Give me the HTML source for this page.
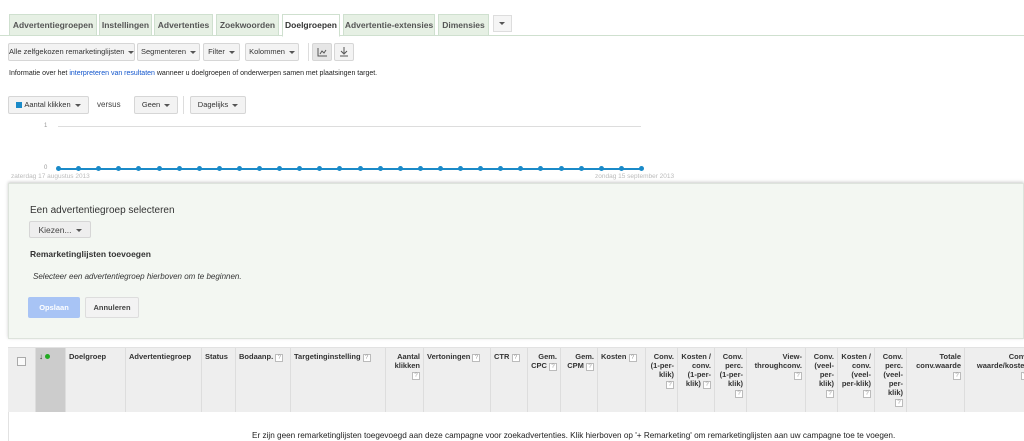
<!DOCTYPE html>
<html><head><meta charset="utf-8"><style>
*{box-sizing:border-box;margin:0;padding:0}
body{width:1024px;height:441px;overflow:hidden;background:#fff;font-family:"Liberation Sans",Arial,sans-serif;color:#222;position:relative}
.a{position:absolute}
.tab{position:absolute;top:14px;height:22px;border:1px solid #cfe0cf;background:#e6f0e4;font-size:8.5px;font-weight:bold;color:#555;text-align:center;line-height:21px}
.btn{position:absolute;height:18px;border:1px solid #d6d6d6;background:#f3f3f3;border-radius:2px;font-size:7.5px;color:#333;line-height:16px;padding:0;text-align:center;white-space:nowrap;overflow:hidden}
.car{display:inline-block;width:0;height:0;border-left:3px solid transparent;border-right:3px solid transparent;border-top:3px solid #555;vertical-align:middle;margin-left:4px}
.th{position:absolute;top:348px;height:64px;border-left:1px solid #ddd;background:#eee;font-size:7.5px;font-weight:bold;color:#333;padding:4px 3px;line-height:9px}
.q{display:inline-block;width:8px;height:8px;border:1px solid #bbb;background:#fff;font-size:6px;color:#999;line-height:6px;text-align:center;font-weight:normal}
.r{text-align:right}
.dot{position:absolute;top:166px;width:5px;height:5px;border-radius:50%;background:#1a8ac8}
</style></head><body>
<div class="a" style="left:0;top:35px;width:1024px;height:1px;background:#cfe0cf"></div>
<div class="tab" style="left:9px;width:88px">Advertentiegroepen</div>
<div class="tab" style="left:99px;width:53px">Instellingen</div>
<div class="tab" style="left:154px;width:59px">Advertenties</div>
<div class="tab" style="left:216px;width:63px">Zoekwoorden</div>
<div class="tab" style="left:282px;width:58px;background:#fff;border-bottom-color:#fff;color:#333;height:23px">Doelgroepen</div>
<div class="tab" style="left:343px;width:92px">Advertentie-extensies</div>
<div class="tab" style="left:438px;width:51px">Dimensies</div>
<div class="a" style="left:493px;top:15px;width:19px;height:17px;border:1px solid #ddd;background:#f5f5f5"><span class="car" style="margin:6px 0 0 5px;display:block"></span></div>

<div class="btn" style="left:8px;top:43px;width:127px">Alle zelfgekozen remarketinglijsten<span class="car"></span></div>
<div class="btn" style="left:137px;top:43px;width:63px">Segmenteren<span class="car"></span></div>
<div class="btn" style="left:203px;top:43px;width:37px">Filter<span class="car"></span></div>
<div class="btn" style="left:245px;top:43px;width:54px">Kolommen<span class="car"></span></div>
<div class="a" style="left:308px;top:43px;width:1px;height:18px;background:#ddd"></div>
<div class="btn" style="left:312px;top:43px;width:20px;background:#e6e6e6"><svg width="10" height="9" style="margin-top:4px"><path d="M1 0V8H10M3 6L5 3L7 5L9 2" stroke="#555" fill="none"/></svg></div>
<div class="btn" style="left:334px;top:43px;width:20px"><svg width="10" height="10" style="margin-top:3px"><path d="M5 0V6M2 4L5 7L8 4M1 9H9" stroke="#555" fill="none"/></svg></div>

<div class="a" style="left:9px;top:70px;font-size:7px;color:#222">Informatie over het <span style="color:#1155cc">interpreteren van resultaten</span> wanneer u doelgroepen of onderwerpen samen met plaatsingen target.</div>

<div class="btn" style="left:8px;top:96px;width:81px"><span style="display:inline-block;width:6px;height:6px;background:#1a8ac8;vertical-align:middle;margin-right:2px"></span>Aantal klikken<span class="car"></span></div>
<div class="a" style="left:97px;top:100px;font-size:8px;color:#444">versus</div>
<div class="btn" style="left:134px;top:96px;width:44px">Geen<span class="car"></span></div>
<div class="a" style="left:183px;top:96px;width:1px;height:18px;background:#ddd"></div>
<div class="btn" style="left:190px;top:96px;width:56px">Dagelijks<span class="car"></span></div>

<div class="a" style="left:44px;top:123px;font-size:6px;color:#999">1</div>
<div class="a" style="left:58px;top:126px;width:583px;height:1px;background:#ddd"></div>
<div class="a" style="left:44px;top:165px;font-size:6px;color:#999">0</div>
<div class="a" style="left:58px;top:168px;width:583px;height:1.5px;background:#1a8ac8"></div>
<div id="dots"></div>
<script>
var h='';for(var i=0;i<30;i++){var x=56+i*20.1;h+='<div class="dot" style="left:'+x+'px"></div>';}document.getElementById('dots').innerHTML=h;
</script>
<div class="a" style="left:11px;top:173px;font-size:6.5px;color:#bbb">zaterdag 17 augustus 2013</div>
<div class="a" style="left:595px;top:173px;font-size:6.5px;color:#bbb">zondag 15 september 2013</div>

<div class="a" style="left:8px;top:183px;width:1016px;height:156px;background:#f3f7f2;border:1px solid #dde3dc;box-shadow:0 -1px 3px #ccc"></div>
<div class="a" style="left:30px;top:205px;font-size:10px;color:#333">Een advertentiegroep selecteren</div>
<div class="btn" style="left:29px;top:221px;width:62px;height:17px;font-size:8.5px;color:#444;background:#eee">Kiezen...<span class="car"></span></div>
<div class="a" style="left:30px;top:249px;font-size:8.5px;font-weight:bold;color:#333">Remarketinglijsten toevoegen</div>
<div class="a" style="left:33px;top:272px;font-size:8px;font-style:italic;color:#333">Selecteer een advertentiegroep hierboven om te beginnen.</div>
<div class="a" style="left:28px;top:297px;width:52px;height:21px;background:#a8c4f5;border-radius:2px;color:#fff;font-size:7.5px;font-weight:bold;text-align:center;line-height:21px">Opslaan</div>
<div class="a" style="left:85px;top:297px;width:54px;height:21px;background:#f3f3f3;border:1px solid #ddd;border-radius:2px;color:#444;font-size:7.5px;font-weight:bold;text-align:center;line-height:19px">Annuleren</div>

<div class="a" style="left:8px;top:347px;width:1016px;height:94px;border:1px solid #e2e2e2;border-right:none;border-bottom:none"></div>
<div class="th" style="left:8px;width:27px;border-left:none"><span style="display:block;width:9px;height:9px;border:1px solid #aaa;background:#fafafa;margin:5px 0 0 6px"></span></div>
<div class="th" style="left:35px;width:30px;background:#ccc;font-size:8px">↓ <span style="display:inline-block;width:5px;height:5px;border-radius:50%;background:#2a2;vertical-align:middle"></span></div>
<div class="th" style="left:65px;width:60px">Doelgroep</div>
<div class="th" style="left:125px;width:76px">Advertentiegroep</div>
<div class="th" style="left:201px;width:34px">Status</div>
<div class="th" style="left:235px;width:55px">Bodaanp. <span class="q">?</span></div>
<div class="th" style="left:290px;width:95px">Targetinginstelling <span class="q">?</span></div>
<div class="th r" style="left:385px;width:38px">Aantal klikken <span class="q">?</span></div>
<div class="th" style="left:423px;width:67px">Vertoningen <span class="q">?</span></div>
<div class="th" style="left:490px;width:37px">CTR <span class="q">?</span></div>
<div class="th r" style="left:527px;width:33px">Gem. CPC <span class="q">?</span></div>
<div class="th r" style="left:560px;width:37px">Gem. CPM <span class="q">?</span></div>
<div class="th" style="left:597px;width:48px">Kosten <span class="q">?</span></div>
<div class="th r" style="left:645px;width:32px">Conv. (1-per-klik) <span class="q">?</span></div>
<div class="th r" style="left:677px;width:37px">Kosten / conv. (1-per-klik) <span class="q">?</span></div>
<div class="th r" style="left:714px;width:32px">Conv. perc. (1-per-klik) <span class="q">?</span></div>
<div class="th r" style="left:746px;width:59px">View-throughconv. <span class="q">?</span></div>
<div class="th r" style="left:805px;width:32px">Conv. (veel-per-klik) <span class="q">?</span></div>
<div class="th r" style="left:837px;width:37px">Kosten / conv. (veel-per-klik) <span class="q">?</span></div>
<div class="th r" style="left:874px;width:32px">Conv. perc. (veel-per-klik) <span class="q">?</span></div>
<div class="th r" style="left:906px;width:58px">Totale conv.waarde <span class="q">?</span></div>
<div class="th r" style="left:964px;width:68px">Conv. waarde/kosten <span class="q">?</span></div>
<div class="a" style="left:252px;top:431px;font-size:8.2px;color:#222;white-space:nowrap">Er zijn geen remarketinglijsten toegevoegd aan deze campagne voor zoekadvertenties. Klik hierboven op '+ Remarketing' om remarketinglijsten aan uw campagne toe te voegen.</div>
</body></html>
